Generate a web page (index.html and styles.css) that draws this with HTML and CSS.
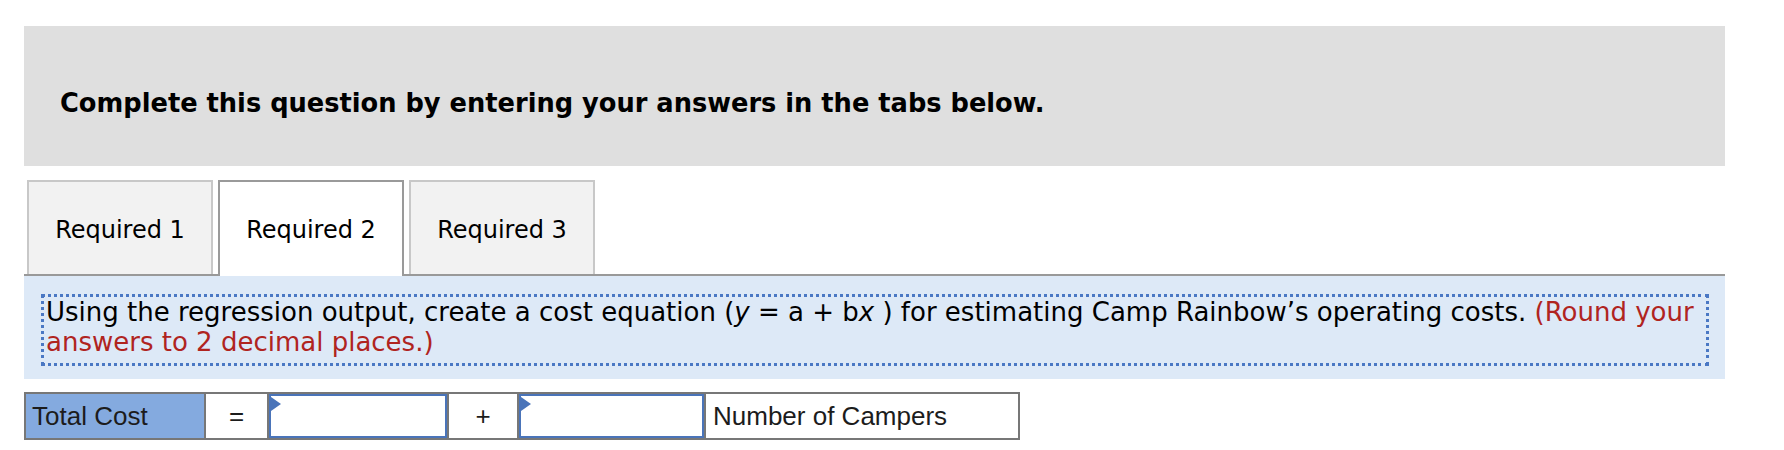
FILE: index.html
```html
<!DOCTYPE html>
<html>
<head>
<meta charset="utf-8">
<link rel="stylesheet" href="styles.css">
</head>
<body>
<div class="page">
  <div class="banner">
    <p class="banner-text">Complete this question by entering your answers in the tabs below.</p>
  </div>
  <div class="tabs">
    <div class="tab">Required 1</div>
    <div class="tab tab-active">Required 2</div>
    <div class="tab">Required 3</div>
  </div>
  <div class="panel">
    <div class="prompt">Using the regression output, create a cost equation (<i class="var">y</i> = a + b<i class="var">x</i> ) for estimating Camp Rainbow’s operating costs. <span class="note">(Round your answers to 2 decimal places.)</span></div>
  </div>
  <div class="equation">
    <div class="cell cell-label">Total Cost</div>
    <div class="cell cell-op op-eq">=</div>
    <div class="cell cell-input input-a"><span class="flag"></span></div>
    <div class="cell cell-op op-plus">+</div>
    <div class="cell cell-input input-b"><span class="flag"></span></div>
    <div class="cell cell-unit">Number of Campers</div>
  </div>
</div>
</body>
</html>
```

FILE: styles.css
```css
* { box-sizing: border-box; }
html, body { margin: 0; padding: 0; background: #ffffff; }
body {
  width: 1784px;
  height: 450px;
  overflow: hidden;
  font-family: "DejaVu Sans", sans-serif;
  color: #000;
}
.page {
  padding: 26px 0 0 24px;
  width: 1725px;
}
.banner {
  height: 140px;
  background: #dfdfdf;
  display: flex;
  align-items: center;
  padding-left: 36px;
  padding-top: 13px;
}
.banner-text {
  margin: 0;
  font-weight: bold;
  font-size: 25.7px;
}
.tabs {
  margin-top: 14px;
  height: 96px;
  display: flex;
  align-items: flex-start;
  gap: 5px;
  padding-left: 3px;
  border-bottom: 2px solid #999999;
}
.tab {
  width: 186px;
  height: 94px;
  border: 2px solid #c8c8c8;
  border-bottom: none;
  background: #f2f2f2;
  display: flex;
  align-items: center;
  justify-content: center;
  font-size: 24px;
  padding-top: 4px;
}
.tab-active {
  background: #ffffff;
  border-color: #9a9a9a;
  height: 96px;
  margin-bottom: -2px;
  padding-bottom: 2px;
}
.panel {
  background: #dde9f7;
  height: 103px;
  padding: 18px 0 0 17px;
}
.prompt {
  width: 1668px;
  height: 72px;
  border: 3px dotted #4a78c4;
  padding: 0 1px 0 2px;
  font-size: 26px;
  line-height: 30px;
}
.var { font-style: italic; }
.note { color: #b0241f; }
.equation {
  margin-top: 13px;
  width: 996px;
  height: 48px;
  display: flex;
  gap: 2px;
  padding: 2px;
  background: #777777;
  font-family: "Liberation Sans", Arial, sans-serif;
  font-size: 26px;
  color: #1c1c1c;
}
.cell {
  height: 44px;
  background: #ffffff;
  display: flex;
  align-items: center;
}
.cell-label {
  width: 178px;
  background: #84aadf;
  padding-left: 6px;
}
.cell-op { justify-content: center; }
.op-eq { width: 61px; }
.op-plus { width: 68px; }
.cell-input {
  border: 2px solid #4a74b9;
  align-items: flex-start;
}
.input-a { width: 178px; }
.input-b { width: 185px; }
.flag {
  width: 0;
  height: 0;
  border-left: 10px solid #4a74b9;
  border-top: 7px solid transparent;
  border-bottom: 7px solid transparent;
  margin-top: 1px;
}
.cell-unit {
  width: 312px;
  padding-left: 7px;
}
```
